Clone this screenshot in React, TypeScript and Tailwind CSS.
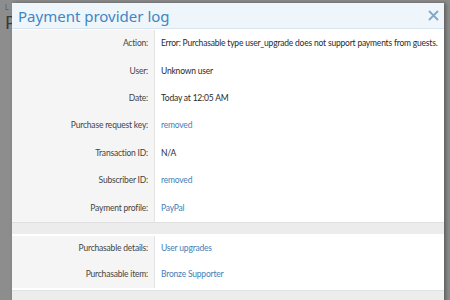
import React from 'react';

type Row = { label: string; value: string; link?: boolean };

const mainRows: Row[] = [
  { label: 'Action:', value: 'Error: Purchasable type user_upgrade does not support payments from guests.' },
  { label: 'User:', value: 'Unknown user' },
  { label: 'Date:', value: 'Today at 12:05 AM' },
  { label: 'Purchase request key:', value: 'removed', link: true },
  { label: 'Transaction ID:', value: 'N/A' },
  { label: 'Subscriber ID:', value: 'removed', link: true },
  { label: 'Payment profile:', value: 'PayPal', link: true },
];

const purchasableRows: Row[] = [
  { label: 'Purchasable details:', value: 'User upgrades', link: true },
  { label: 'Purchasable item:', value: 'Bronze Supporter', link: true },
];

const InfoRow: React.FC<{ row: Row; height: string }> = ({ row, height }) => (
  <div className={`flex ${height}`}>
    <div className="w-[143px] shrink-0 bg-[#f5f5f5] border-r border-[#e4e4e4] flex items-center justify-end pr-[6px] text-[#444444]">
      {row.label}
    </div>
    <div className={`flex items-center pl-[6px] whitespace-nowrap ${row.link ? 'text-[#3f80b8]' : 'text-[#2a2a2a]'}`}>
      {row.value}
    </div>
  </div>
);

export default function App() {
  return (
    <div className="relative w-[450px] h-[300px] overflow-hidden bg-[#8d8d8d] pt-[3px] pl-[12px]" style={{ fontFamily: 'Lato, "Noto Sans", sans-serif' }}>
      {/* page behind the overlay */}
      <div className="absolute left-[5px] top-[2px] text-[7px] text-[#5c5c5c]">L</div>
      <div className="absolute left-[5px] top-[12px] text-[18px] leading-[20px] text-[#3a3a3a]">P</div>

      {/* modal */}
      <div className="relative w-[432px] h-[310px] flex flex-col bg-white shadow-[2px_0_4px_rgba(0,0,0,0.35)] text-[8.5px] tracking-[-0.2px]">
        <div className="flex items-center justify-between h-[26px] shrink-0 bg-[#eef5fb] border-b border-[#d8e4ee] pl-[6px] pr-[5px] tracking-normal" style={{ fontFamily: '"Noto Sans", sans-serif' }}>
          <h1 className="text-[15px] leading-[18px] text-[#3f86c3]">Payment provider log</h1>
          <svg width="11" height="11" viewBox="0 0 11 11" className="text-[#7fa9cc]">
            <path d="M1.5 1.5 L9.5 9.5 M9.5 1.5 L1.5 9.5" stroke="currentColor" strokeWidth="1.8" strokeLinecap="round" />
          </svg>
        </div>
        <div className="pt-[1px]">
          {mainRows.map((row) => (
            <InfoRow key={row.label} row={row} height="h-[27.4px]" />
          ))}
        </div>
        <div className="h-[12px] shrink-0 bg-[#ececec] border-t border-[#e0e0e0]" />
        <div className="pt-[2px] pb-[2px]">
          {purchasableRows.map((row) => (
            <InfoRow key={row.label} row={row} height="h-[26px]" />
          ))}
        </div>
        <div className="flex-1 bg-[#ececec] border-t border-[#e3e3e3]" />
      </div>
    </div>
  );
}
